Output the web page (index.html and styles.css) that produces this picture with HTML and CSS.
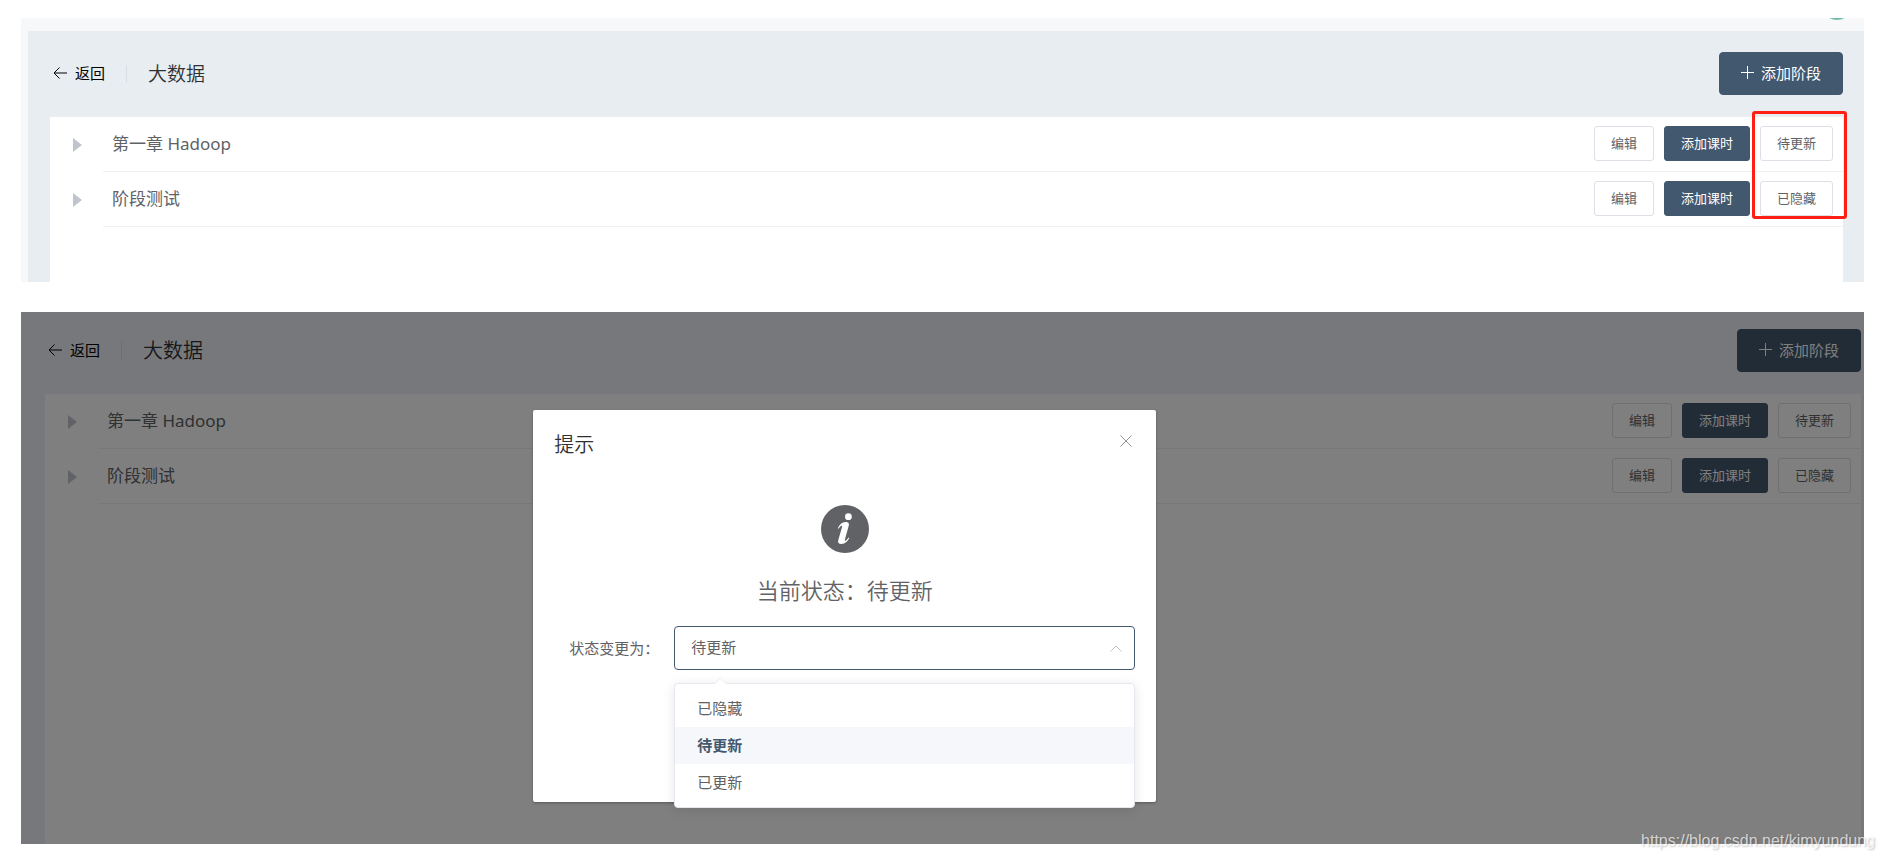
FILE: index.html
```html
<!DOCTYPE html>
<html lang="zh-CN">
<head>
<meta charset="utf-8">
<title>大数据</title>
<link rel="stylesheet" href="styles.css">
</head>
<body>
<main class="page">
  <section class="shot shot-list">
    <div class="topbar"><span class="avatar"></span></div>
    <div class="content">
      <header class="head">
        <button class="back" type="button">
          <svg class="arrow" viewBox="0 0 14 12"><path d="M14 6H1M6.500 .5L1 6l5.500 5.500"/></svg>返回
        </button>
        <span class="divider"></span>
        <h1 class="title">大数据</h1>
        <button class="btn btn-dark btn-large" type="button">
          <svg class="plus" viewBox="0 0 13 13"><path d="M6.500 0v13M0 6.500h13"/></svg>添加阶段
        </button>
      </header>
      <ul class="panel">
        <li class="row">
          <span class="caret"></span>
          <div class="row-main">
            <span class="name">第一章 Hadoop</span>
            <button class="btn" type="button">编辑</button>
            <button class="btn btn-dark" type="button">添加课时</button>
            <button class="btn" type="button">待更新</button>
          </div>
        </li>
        <li class="row">
          <span class="caret"></span>
          <div class="row-main">
            <span class="name">阶段测试</span>
            <button class="btn" type="button">编辑</button>
            <button class="btn btn-dark" type="button">添加课时</button>
            <button class="btn" type="button">已隐藏</button>
          </div>
        </li>
      </ul>
    </div>
    <span class="highlight"></span>
  </section>

  <section class="shot shot-dialog">
    <div class="content">
      <header class="head">
        <button class="back" type="button">
          <svg class="arrow" viewBox="0 0 14 12"><path d="M14 6H1M6.500 .5L1 6l5.500 5.500"/></svg>返回
        </button>
        <span class="divider"></span>
        <h2 class="title">大数据</h2>
        <button class="btn btn-dark btn-large" type="button">
          <svg class="plus" viewBox="0 0 13 13"><path d="M6.500 0v13M0 6.500h13"/></svg>添加阶段
        </button>
      </header>
      <ul class="panel">
        <li class="row">
          <span class="caret"></span>
          <div class="row-main">
            <span class="name">第一章 Hadoop</span>
            <button class="btn" type="button">编辑</button>
            <button class="btn btn-dark" type="button">添加课时</button>
            <button class="btn" type="button">待更新</button>
          </div>
        </li>
        <li class="row">
          <span class="caret"></span>
          <div class="row-main">
            <span class="name">阶段测试</span>
            <button class="btn" type="button">编辑</button>
            <button class="btn btn-dark" type="button">添加课时</button>
            <button class="btn" type="button">已隐藏</button>
          </div>
        </li>
      </ul>
    </div>
    <div class="mask">
      <div class="dialog" role="dialog" aria-labelledby="dialog-title">
        <header class="dialog-head">
          <h3 class="dialog-title" id="dialog-title">提示</h3>
          <button class="close" type="button" aria-label="关闭">
            <svg class="cross" viewBox="0 0 12 12"><path d="M.5 .5l11 11M11.500 .5l-11 11"/></svg>
          </button>
        </header>
        <svg class="info" viewBox="0 0 48 48">
          <circle cx="24" cy="24" r="24" fill="#606266"/>
          <circle cx="27.400" cy="11.700" r="3.400" fill="#fff"/>
          <path d="M16.800 23.200C18.500 19.500 21 17.200 24.500 17c2.800-.2 3.900 1.200 3.300 3.600l-3.900 14c-.3 1.200.2 1.500 1 .9 1-.8 1.800-1.600 2.600-2.900l.8.5c-1.800 3.600-4.400 5.800-7.700 5.900-2.900.1-4-1.500-3.300-4l3.600-12.500c.5-1.700 0-2.200-1-1.500-.8.600-1.500 1.500-2.300 2.700z" fill="#fff"/>
        </svg>
        <p class="status">当前状态：待更新</p>
        <div class="field">
          <label class="label" for="state">状态变更为：</label>
          <div class="select-box">
            <select class="select" id="state">
              <option>已隐藏</option>
              <option selected>待更新</option>
              <option>已更新</option>
            </select>
            <svg class="chevron" viewBox="0 0 12 7"><path d="M.5 6.500L6 1l5.500 5.500"/></svg>
            <ul class="menu" role="listbox" aria-label="状态">
              <li class="option" role="option" aria-selected="false">已隐藏</li>
              <li class="option option-active" role="option" aria-selected="true">待更新</li>
              <li class="option" role="option" aria-selected="false">已更新</li>
            </ul>
          </div>
        </div>
      </div>
    </div>
  </section>
  <span class="watermark">https://blog.csdn.net/kimyundung</span>
</main>
</body>
</html>
```
FILE: styles.css
```css
* { box-sizing: border-box; }

body {
  margin: 0;
  background: #fff;
  color: #606266;
  font-family: "Noto Sans", "Noto Sans CJK SC", sans-serif;
  font-size: 15px;
  font-weight: 400;
}

h1, h2, h3, p, ul { margin: 0; padding: 0; font-weight: 350; }
ul { list-style: none; }
button, select { font: inherit; color: inherit; }
svg { fill: none; stroke: currentColor; flex: none; }

.page {
  position: relative;
  display: flex;
  flex-direction: column;
  gap: 30px;
  padding: 18px 21px 16px;
}

.shot { position: relative; }
.shot-list { background: #f7f8fa; }
.shot-dialog { background: #eef0f6; }

.topbar {
  display: flex;
  justify-content: flex-end;
  height: 13px;
  padding-right: 12px;
  overflow: hidden;
}
.avatar {
  width: 30px;
  height: 30px;
  margin-top: -28px;
  border-radius: 50%;
  background: #72bfa6;
}

.shot-list .content {
  margin-left: 7px;
  padding: 21px 21px 0 22px;
  background: #e8edf1;
}
.shot-dialog .content { padding: 17px 3px 0 24px; }

.head {
  display: flex;
  align-items: center;
  padding-bottom: 22px;
}
.back {
  display: flex;
  align-items: center;
  gap: 8px;
  padding: 0 0 2px 3px;
  border: 0;
  background: none;
  color: #000;
}
.arrow { width: 14px; height: 12px; }
.divider {
  width: 1px;
  height: 18px;
  margin: 0 21px;
  background: #d8dce4;
}
.title { flex: 1; color: #303133; font-size: 20px; line-height: 28px; }
.shot-list .title { font-size: 19px; }

.btn {
  display: flex;
  align-items: center;
  justify-content: center;
  height: 35px;
  padding: 0 16px 3px;
  border: 1px solid #dcdfe6;
  border-radius: 3px;
  background: #fff;
  font-size: 13px;
  white-space: nowrap;
}
.btn-dark { border-color: #42586f; background: #42586f; color: #fff; }
.btn-large { gap: 7px; height: 43px; padding: 0 21px 2px; border-radius: 4px; font-size: 15px; }
.plus { width: 13px; height: 13px; }

.panel { min-height: 165px; background: #fff; font-weight: 400; }
.shot-dialog .panel { min-height: 450px; }
.row { display: flex; align-items: center; padding-left: 23px; }
.caret {
  border-style: solid;
  border-width: 7px 0 7px 9px;
  border-color: transparent transparent transparent #c0c4cc;
}
.row-main {
  flex: 1;
  display: flex;
  align-items: center;
  gap: 10px;
  height: 55px;
  margin-left: 21px;
  padding: 0 10px 1px 9px;
  border-bottom: 1px solid #f0f1f4;
}
.name { flex: 1; font-size: 17px; line-height: 24px; }

.highlight {
  position: absolute;
  top: 93px;
  right: 17px;
  width: 95px;
  height: 108px;
  border: 3px solid #ff2015;
  border-radius: 3px;
}

.mask {
  position: absolute;
  inset: 0;
  background: rgba(0, 0, 0, .5);
}
.dialog {
  width: 33.8%;
  min-height: 392px;
  margin: 98px 0 0 27.8%;
  padding: 21px;
  border-radius: 2px;
  background: #fff;
  box-shadow: 0 1px 3px rgba(0, 0, 0, .3);
}
.dialog-head { display: flex; justify-content: space-between; }
.dialog-title { color: #303133; font-size: 20px; line-height: 28px; }
.close {
  display: flex;
  height: 20px;
  padding: 4px 3px;
  border: 0;
  background: none;
  color: #909399;
}
.cross { width: 12px; height: 12px; }
.info { display: block; width: 48px; height: 48px; margin: 46px auto 0; stroke: none; }
.status { margin: 21px 0 20px; font-size: 22px; line-height: 32px; text-align: center; }
.field { display: flex; align-items: center; }
.label { flex: none; width: 120px; padding: 0 0 2px 15px; }
.select-box { position: relative; flex: 1; }
.select {
  display: block;
  width: 100%;
  height: 44px;
  padding: 0 16px 2px;
  border: 1px solid #42586f;
  border-radius: 4px;
  background: #fff;
  appearance: none;
}
.chevron {
  position: absolute;
  top: 19px;
  right: 13px;
  width: 12px;
  height: 7px;
  color: #c0c4cc;
}
.menu {
  position: absolute;
  top: 57px;
  left: 0;
  right: 0;
  padding: 6px 0;
  border: 1px solid #e4e7ed;
  border-radius: 4px;
  background: #fff;
  font-weight: 400;
  box-shadow: 0 2px 12px rgba(0, 0, 0, .1);
}
.menu::before {
  content: "";
  position: absolute;
  top: -5px;
  left: 41px;
  width: 8px;
  height: 8px;
  border: solid #ebeef5;
  border-width: 1px 0 0 1px;
  background: #fff;
  transform: rotate(45deg);
}
.option { padding: 0 22px; line-height: 37px; }
.option-active { background: #f5f7fa; color: #42586f; font-weight: 700; }

.watermark {
  position: absolute;
  right: 10px;
  bottom: 9px;
  color: rgba(255, 255, 255, .7);
  font: 16px/20px "Liberation Sans", sans-serif;
  text-shadow: 1px 1px 2px rgba(0, 0, 0, .25);
}
```
